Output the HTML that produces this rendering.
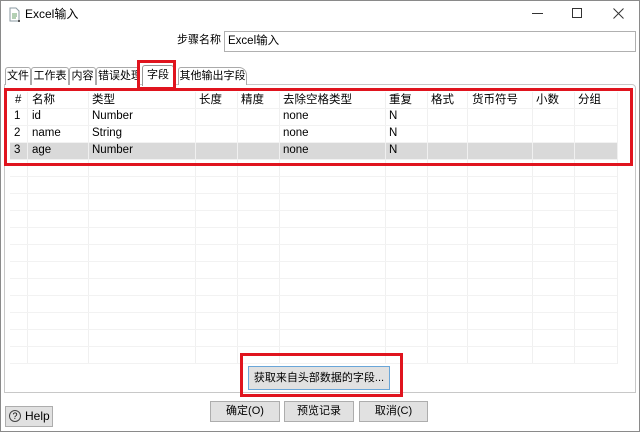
<!DOCTYPE html>
<html><head><meta charset="utf-8"><style>
*{margin:0;padding:0;box-sizing:border-box}
body{width:640px;height:432px;background:#fff;font-family:"Liberation Sans","Noto Sans CJK SC",sans-serif;font-size:11px;color:#000;position:relative;overflow:hidden}
div{white-space:nowrap}
.a{position:absolute}
.t{position:absolute;white-space:nowrap;line-height:17px;font-size:11.5px}
.tab{position:absolute;top:67px;height:18px;border:1px solid #aaa;border-bottom:none;border-radius:3px 3px 0 0;background:#fff;font-size:11px;line-height:16px;text-align:center;overflow:hidden}
.btn{position:absolute;background:#e1e1e1;border:1px solid #adadad;text-align:center;font-size:11px}
.vl{position:absolute;top:92px;height:272px;width:1px;background:#f0f0f0}
.hl{position:absolute;left:10px;width:607px;height:1px;background:#f2f2f2}
.red{position:absolute;border:3px solid #e0141e}
</style></head><body>
<div class="a" style="left:0;top:0;width:640px;height:432px;border:1px solid #8a8a8a"></div>
<svg class="a" style="left:8px;top:7px" width="14" height="16" viewBox="0 0 14 16"><path d="M2 1h6l3 3v10H2z" fill="none" stroke="#8a9aa0" stroke-width="1"/><path d="M4 7h5M4 9h5M4 11h4" stroke="#6aa06a"/><rect x="10" y="13" width="2" height="2" fill="#555"/></svg>
<div class="t" style="left:25px;top:6px;font-size:12px">Excel输入</div>
<div class="a" style="left:532px;top:13px;width:11px;height:1px;background:#333"></div>
<div class="a" style="left:572px;top:8px;width:10px;height:10px;border:1px solid #333"></div>
<svg class="a" style="left:613px;top:8px" width="11" height="11"><path d="M0.5 0.5L10.5 10.5M10.5 0.5L0.5 10.5" stroke="#333"/></svg>
<div class="t" style="left:177px;top:32px;font-size:11px">步骤名称</div>
<div class="a" style="left:224px;top:31px;width:412px;height:21px;border:1px solid #b0b0b0"></div>
<div class="t" style="left:228px;top:33px">Excel输入</div>
<div class="a" style="left:4px;top:84px;width:632px;height:309px;border:1px solid #c8c8c8;border-radius:0 4px 0 0"></div>
<div class="tab" style="left:5px;width:26px">文件</div>
<div class="tab" style="left:31px;width:38px">工作表</div>
<div class="tab" style="left:69px;width:27px">内容</div>
<div class="tab" style="left:96px;width:44px;text-align:left;padding-left:1px">错误处理</div>
<div class="tab" style="left:142px;width:32px;top:65px;height:21px;border-color:#999;line-height:19px">字段</div>
<div class="tab" style="left:178px;width:69px;border-radius:3px 8px 0 0">其他输出字段</div>
<div class="a" style="left:10px;top:142px;width:607px;height:17px;background:#d9d9d9"></div>
<div class="vl" style="left:27px"></div><div class="vl" style="left:88px"></div><div class="vl" style="left:195px"></div><div class="vl" style="left:237px"></div><div class="vl" style="left:279px"></div><div class="vl" style="left:385px"></div><div class="vl" style="left:427px"></div><div class="vl" style="left:467px"></div><div class="vl" style="left:532px"></div><div class="vl" style="left:574px"></div><div class="vl" style="left:617px"></div>
<div class="hl" style="top:108px"></div><div class="hl" style="top:125px"></div><div class="hl" style="top:142px"></div><div class="hl" style="top:159px"></div><div class="hl" style="top:176px"></div><div class="hl" style="top:193px"></div><div class="hl" style="top:210px"></div><div class="hl" style="top:227px"></div><div class="hl" style="top:244px"></div><div class="hl" style="top:261px"></div><div class="hl" style="top:278px"></div><div class="hl" style="top:295px"></div><div class="hl" style="top:312px"></div><div class="hl" style="top:329px"></div><div class="hl" style="top:346px"></div><div class="hl" style="top:363px"></div>
<div class="t" style="left:15px;top:92px">#</div><div class="t" style="left:32px;top:92px">名称</div><div class="t" style="left:92px;top:92px">类型</div><div class="t" style="left:199px;top:92px">长度</div><div class="t" style="left:241px;top:92px">精度</div><div class="t" style="left:283px;top:92px">去除空格类型</div><div class="t" style="left:389px;top:92px">重复</div><div class="t" style="left:431px;top:92px">格式</div><div class="t" style="left:472px;top:92px">货币符号</div><div class="t" style="left:536px;top:92px">小数</div><div class="t" style="left:578px;top:92px">分组</div>
<div class="t" style="left:14px;top:108px">1</div><div class="t" style="left:32px;top:108px">id</div><div class="t" style="left:92px;top:108px">Number</div><div class="t" style="left:283px;top:108px">none</div><div class="t" style="left:389px;top:108px">N</div>
<div class="t" style="left:14px;top:125px">2</div><div class="t" style="left:32px;top:125px">name</div><div class="t" style="left:92px;top:125px">String</div><div class="t" style="left:283px;top:125px">none</div><div class="t" style="left:389px;top:125px">N</div>
<div class="t" style="left:14px;top:142px">3</div><div class="t" style="left:32px;top:142px">age</div><div class="t" style="left:92px;top:142px">Number</div><div class="t" style="left:283px;top:142px">none</div><div class="t" style="left:389px;top:142px">N</div>
<div class="btn" style="left:248px;top:366px;width:142px;height:24px;border-color:#6aa6d8;line-height:22px">获取来自头部数据的字段...</div>
<div class="btn" style="left:210px;top:401px;width:70px;height:21px;line-height:19px">确定(O)</div>
<div class="btn" style="left:284px;top:401px;width:70px;height:21px;line-height:19px">预览记录</div>
<div class="btn" style="left:359px;top:401px;width:69px;height:21px;line-height:19px">取消(C)</div>
<div class="btn" style="left:5px;top:406px;width:48px;height:21px;line-height:19px;text-align:left;padding-left:19px;font-size:12px">Help</div>
<div class="a" style="left:9px;top:410px;width:12px;height:12px;border:1px solid #444;border-radius:50%;font-size:9px;line-height:10px;text-align:center">?</div>
<div class="red" style="left:137px;top:60px;width:39px;height:30px"></div>
<div class="red" style="left:4px;top:88px;width:629px;height:78px"></div>
<div class="red" style="left:240px;top:353px;width:163px;height:44px"></div>
</body></html>
